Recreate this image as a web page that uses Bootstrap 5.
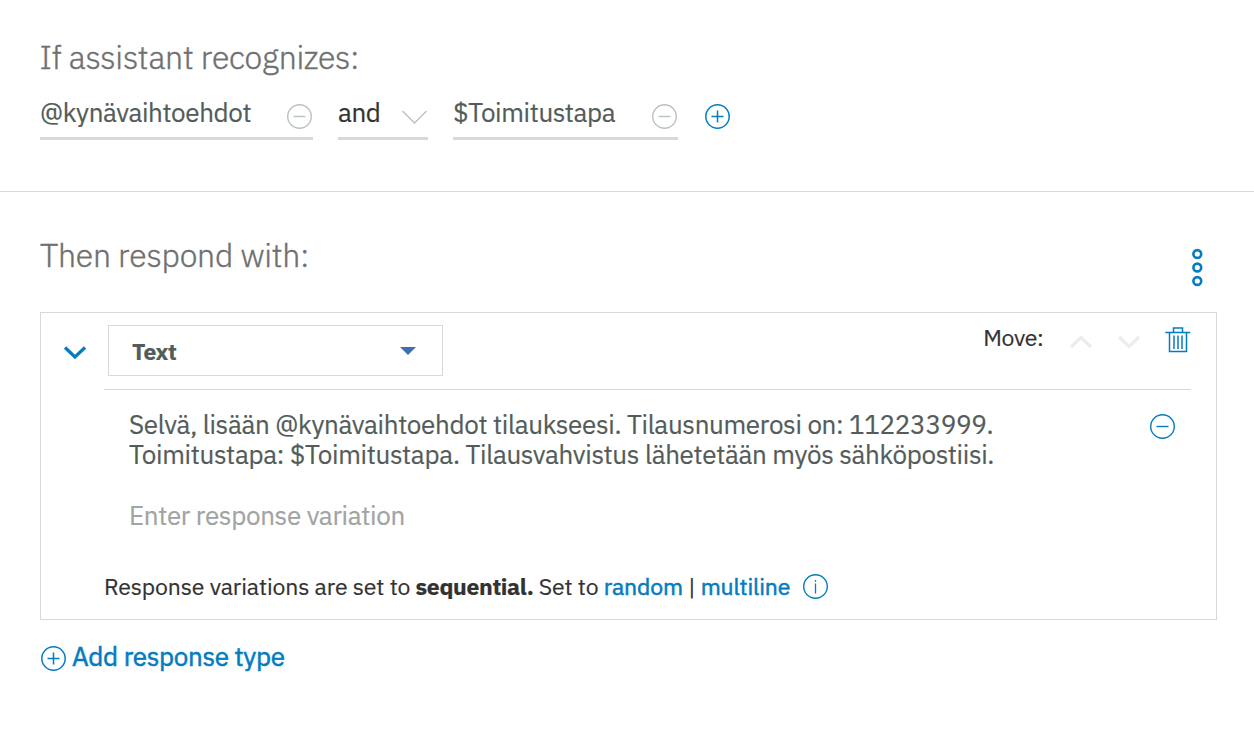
<!DOCTYPE html>
<html lang="en">
<head>
<meta charset="utf-8">
<meta name="viewport" content="width=device-width, initial-scale=1">
<title>Assistant node</title>
<link rel="stylesheet" href="https://cdn.jsdelivr.net/npm/bootstrap@5.3.0/dist/css/bootstrap.min.css">
<style>
body{font-family:"IBM Plex Sans",Roboto,sans-serif;color:#323232;background:#fff;-webkit-text-stroke:.2px currentColor}
svg{display:block;flex:none;fill:none}
.blue{color:#047cc0}
.slate{color:#535c5a}
.strong-link{-webkit-text-stroke-width:.55px}
.when{height:192px;padding:37px 40px 0 39.500px;border-bottom:1px solid #d8d8d8}
.then{padding:43px 37px 0 40px}
.title{font-size:32px;font-weight:300;line-height:40px;color:#6f6f6f;margin:0;letter-spacing:-.2px;-webkit-text-stroke-width:.4px}
.conds{margin:19px 0 0 .5px}
.cond{height:44px;padding-right:1px;border-bottom:3px solid #d8d8d8;font-size:26px;line-height:32px;white-space:nowrap;letter-spacing:-.39px}
.cond svg,.plus{margin-top:8px}
.cond svg{color:#b8c1c1}
.resp{height:308px;margin-top:37px;border:1px solid #d8d8d8;border-radius:0}
.tools{height:77px;margin:0 25px 0 63px;border-bottom:1px solid #d8d8d8}
.picker{width:335px;height:51px;margin:12px 0 0 21px;padding:1px 26px 0 23px;border:1px solid #d8d8d8;font-size:23px;font-weight:700;letter-spacing:-.5px}
.fold{margin:32px 0 0 -41px}
.move{font-size:23px;line-height:30px;letter-spacing:-.3px}
.move span{margin:9px 25.500px 0 0}
.arrow{color:#ececec;margin:21px 24px 0 0}
.answer{margin:19px 41px 0 88px;font-size:26px;line-height:30px;letter-spacing:-.34px}
.answer p{margin:0;white-space:nowrap}
.hint{margin:31px 0 0 88px;font-size:26px;line-height:30px;color:#a0a4a3;letter-spacing:-.34px}
.mode{margin:41px 0 0 63px;font-size:23px;line-height:30px;white-space:pre;letter-spacing:-.12px}
.mode b{letter-spacing:-.34px}
.mode .blue{letter-spacing:-.14px}
.add{margin-top:20px;font-size:26px;line-height:32px;letter-spacing:-.33px}
</style>
</head>
<body>
<svg width="0" height="0" class="position-absolute">
  <symbol id="minus" viewBox="0 0 25 25"><circle cx="12.500" cy="12.500" r="11.800" stroke="currentColor" stroke-width="1.4"/><path d="M6.500 12.500h12" stroke="currentColor" stroke-width="1.4"/></symbol>
  <symbol id="plus" viewBox="0 0 25 25"><circle cx="12.500" cy="12.500" r="11.700" stroke="currentColor" stroke-width="1.5"/><path d="M6.500 12.500h12M12.500 6.500v12" stroke="currentColor" stroke-width="1.5"/></symbol>
</svg>
<section class="when">
  <h2 class="title">If assistant recognizes:</h2>
  <div class="conds d-flex">
    <div class="cond slate d-flex justify-content-between" style="width:273px"><span>@kynävaihtoehdot</span><svg width="25" height="25"><use href="#minus"/></svg></div>
    <div class="cond d-flex justify-content-between" style="width:90px;margin:0 25px"><span>and</span><svg width="25" height="25"><path d="M.5 7l12 12 12-12" stroke="currentColor" stroke-width="1.4"/></svg></div>
    <div class="cond slate d-flex justify-content-between" style="width:225px"><span>$Toimitustapa</span><svg width="25" height="25"><use href="#minus"/></svg></div>
    <svg class="plus blue" width="25" height="25" style="margin-left:26.500px"><use href="#plus"/></svg>
  </div>
</section>
<section class="then">
  <div class="d-flex justify-content-between">
    <h2 class="title">Then respond with:</h2>
    <svg class="blue" width="12" height="40" style="margin:13px 14px -13px 0"><g stroke="currentColor" stroke-width="2.600"><circle cx="6.300" cy="6" r="3.900"/><circle cx="6.300" cy="19.500" r="3.900"/><circle cx="6.300" cy="33" r="3.900"/></g></svg>
  </div>
  <div class="resp">
    <div class="tools d-flex">
      <svg class="fold blue" width="24" height="14"><path d="M2 2.500l10 9.500 10-9.500" stroke="currentColor" stroke-width="3.200"/></svg>
      <div class="picker slate d-flex align-items-center justify-content-between"><span>Text</span><svg width="16" height="8"><path d="M0 0h16l-8 8z" fill="#3d70b2"/></svg></div>
      <div class="move ms-auto d-flex"><span>Move:</span>
        <svg class="arrow" width="24" height="15"><path d="M2 13l10-9.500L22 13" stroke="currentColor" stroke-width="3.200"/></svg>
        <svg class="arrow" width="24" height="15"><path d="M2 3l10 9.500L22 3" stroke="currentColor" stroke-width="3.200"/></svg>
        <svg class="blue" width="26" height="26" style="margin-top:14px"><path d="M.3 5.500h25M8.500 5V1h9v4M4.500 5.500v19h17v-19M9 8.500v13.500M13 8.500v13.500M17 8.500v13.500" stroke="currentColor" stroke-width="1.500"/></svg>
      </div>
    </div>
    <div class="answer slate d-flex justify-content-between"><p>Selvä, lisään @kynävaihtoehdot tilaukseesi. Tilausnumerosi on: 112233999.<br>Toimitustapa: $Toimitustapa. Tilausvahvistus lähetetään myös sähköpostiisi.</p><svg class="blue" width="25" height="25" style="margin-top:5px"><use href="#minus"/></svg></div>
    <div class="hint">Enter response variation</div>
    <div class="mode d-flex"><span>Response variations are set to </span><b>sequential.</b><span> Set to </span><span class="blue strong-link">random</span><span> | </span><span class="blue strong-link">multiline</span><svg class="blue" width="25" height="25" style="margin:3px 0 0 13px"><circle cx="12.500" cy="12.500" r="11.800" stroke="currentColor" stroke-width="1.4"/><path d="M12.500 6v1.800M12.500 9.500v10" stroke="currentColor" stroke-width="1.300"/></svg></div>
  </div>
  <div class="add blue strong-link d-flex"><svg width="25" height="25" style="margin:6px 6.500px 0 .5px"><use href="#plus"/></svg><span>Add response type</span></div>
</section>
<script src="https://cdn.jsdelivr.net/npm/bootstrap@5.3.0/dist/js/bootstrap.bundle.min.js"></script>
</body>
</html>
